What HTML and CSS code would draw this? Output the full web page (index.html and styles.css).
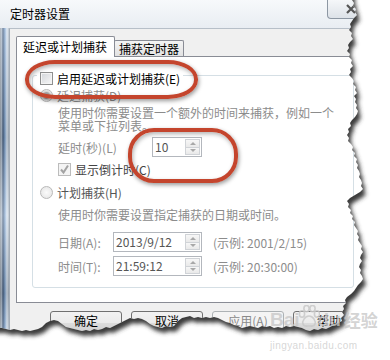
FILE: index.html
```html
<!DOCTYPE html>
<html lang="zh-CN">
<head>
    <meta charset="UTF-8">
    <meta name="viewport" content="width=device-width, initial-scale=1.0">
    <title>定时器设置</title>
    <link rel="stylesheet" href="styles.css">
</head>
<body>
    <div class="window">
        <div class="titlebar">
            <span class="title">定时器设置</span>
            <span class="close">
                <svg width="12" height="10" viewBox="0 0 12 10"><path d="M2 1 L10 9 M10 1 L2 9" stroke="#555" stroke-width="2.2"/></svg>
            </span>
        </div>

        <div class="frame">
            <div class="glass"></div>
            <div class="client">
                <div class="tabs">
                    <div class="tab active">延迟或计划捕获</div>
                    <div class="tab">捕获定时器</div>
                </div>

                <div class="panel">
                    <div class="group">
                        <div class="group-head"><span class="check"></span>启用延迟或计划捕获(E)</div>

                        <div class="row first"><span class="radio on"></span>延迟捕获(D)</div>
                        <p class="desc">使用时你需要设置一个额外的时间来捕获，例如一个<br>菜单或下拉列表。</p>

                        <div class="field delay">
                            <span class="label">延时(秒)(L)</span>
                            <span class="box small"><span class="val">10</span><span class="arrows"><i class="up"></i><i class="down"></i></span></span>
                        </div>

                        <div class="row countdown">
                            <span class="check ticked"><svg width="11" height="11" viewBox="0 0 11 11"><path d="M2 5.5 L4.5 8.5 L9 1.5" fill="none" stroke="#a3a3a3" stroke-width="2"/></svg></span>显示倒计时(C)
                        </div>

                        <div class="row second"><span class="radio"></span>计划捕获(H)</div>
                        <p class="desc desc-2">使用时你需要设置指定捕获的日期或时间。</p>

                        <div class="field date">
                            <span class="label">日期(A):</span>
                            <span class="box wide"><span class="val">2013/9/12</span><span class="arrows"><i class="up"></i><i class="down"></i></span></span>
                            <span class="hint">(示例: 2001/2/15)</span>
                        </div>
                        <div class="field time">
                            <span class="label">时间(T):</span>
                            <span class="box wide"><span class="val">21:59:12</span><span class="arrows"><i class="up"></i><i class="down"></i></span></span>
                            <span class="hint">(示例: 20:30:00)</span>
                        </div>
                    </div>
                </div>

                <div class="buttons">
                    <div class="btn">确定</div>
                    <div class="btn">取消</div>
                    <div class="btn disabled">应用(A)</div>
                    <div class="btn">帮助</div>
                </div>
            </div>
        </div>
    </div>

    <!-- red marks drawn over the screenshot -->
    <div class="ring ring-1"></div>
    <div class="ring ring-2"></div>

    <!-- torn paper edge -->
    <svg class="torn" width="390" height="360" viewBox="0 0 390 360">
        <defs>
            <filter id="soft" x="-10%" y="-10%" width="120%" height="120%"><feGaussianBlur stdDeviation="2.2"/></filter>
            <clipPath id="outside">
                <path clip-rule="evenodd" d="M-20 -20H410V380H-20Z M-10 -10 L352 -10 L352 0 L354 3 L353 6 L356 9 L355 12 L357 15 L354 18 L352 21 L350 24 L351 27 L349 30 L352 33 L351 36 L353 39 L350 42 L348 45 L349 48 L347 51 L350 54 L349 57 L352 60 L351 63 L353 66 L350 69 L351 72 L349 75 L352 78 L354 81 L353 84 L356 87 L355 90 L357 93 L354 96 L356 99 L355 102 L357 105 L356 108 L358 111 L357 114 L355 117 L352 120 L350 123 L351 126 L348 129 L349 132 L347 135 L349 138 L348 141 L351 144 L353 147 L352 150 L355 153 L354 156 L357 159 L356 162 L358 165 L357 168 L359 171 L360 174 L359 177 L361 180 L362 183 L361 186 L363 189 L360 192 L355 195 L350 198 L347 201 L349 204 L348 207 L351 210 L350 213 L353 216 L352 219 L355 222 L354 225 L356 228 L358 231 L357 234 L359 237 L358 240 L360 243 L362 246 L361 249 L363 252 L361 255 L360 258 L362 261 L360 264 L359 267 L361 270 L360 273 L362 276 L363 279 L361 282 L358 285 L356 288 L354 291 L351 294 L347 297 L345 300 L346 303 L343 306 L344 309 L342 312 L344 315 L341 318 L342 321 L338 323 L334 325 L330 327 L326 329 L322 328 L318 330 L314 329 L310 331 L306 330 L302 328 L298 327 L294 326 L290 327 L286 326 L282 328 L278 327 L274 328 L270 326 L266 327 L262 326 L258 328 L254 327 L250 326 L246 327 L242 328 L238 326 L234 325 L230 323 L226 322 L222 320 L218 318 L214 317 L210 318 L206 317 L202 318 L198 317 L194 318 L190 316 L186 317 L182 318 L178 321 L174 326 L170 327 L166 326 L162 328 L158 327 L154 326 L150 324 L146 321 L142 319 L138 318 L134 319 L130 318 L126 320 L122 322 L118 324 L114 326 L110 328 L106 327 L102 329 L98 330 L94 329 L90 331 L86 330 L82 331 L78 330 L74 329 L70 328 L66 327 L62 324 L58 321 L54 320 L50 321 L46 323 L42 327 L38 329 L34 330 L30 331 L26 330 L22 331 L18 330 L14 329 L10 330 L6 329 L2 328 L-10 328 Z"/>
            </clipPath>
        </defs>
        <rect x="-20" y="-20" width="430" height="400" fill="#fff" clip-path="url(#outside)"/>
        <g clip-path="url(#outside)">
            <path transform="translate(3 5)" fill="#3a3a3a" filter="url(#soft)" d="M-10 -10 L352 -10 L352 0 L354 3 L353 6 L356 9 L355 12 L357 15 L354 18 L352 21 L350 24 L351 27 L349 30 L352 33 L351 36 L353 39 L350 42 L348 45 L349 48 L347 51 L350 54 L349 57 L352 60 L351 63 L353 66 L350 69 L351 72 L349 75 L352 78 L354 81 L353 84 L356 87 L355 90 L357 93 L354 96 L356 99 L355 102 L357 105 L356 108 L358 111 L357 114 L355 117 L352 120 L350 123 L351 126 L348 129 L349 132 L347 135 L349 138 L348 141 L351 144 L353 147 L352 150 L355 153 L354 156 L357 159 L356 162 L358 165 L357 168 L359 171 L360 174 L359 177 L361 180 L362 183 L361 186 L363 189 L360 192 L355 195 L350 198 L347 201 L349 204 L348 207 L351 210 L350 213 L353 216 L352 219 L355 222 L354 225 L356 228 L358 231 L357 234 L359 237 L358 240 L360 243 L362 246 L361 249 L363 252 L361 255 L360 258 L362 261 L360 264 L359 267 L361 270 L360 273 L362 276 L363 279 L361 282 L358 285 L356 288 L354 291 L351 294 L347 297 L345 300 L346 303 L343 306 L344 309 L342 312 L344 315 L341 318 L342 321 L338 323 L334 325 L330 327 L326 329 L322 328 L318 330 L314 329 L310 331 L306 330 L302 328 L298 327 L294 326 L290 327 L286 326 L282 328 L278 327 L274 328 L270 326 L266 327 L262 326 L258 328 L254 327 L250 326 L246 327 L242 328 L238 326 L234 325 L230 323 L226 322 L222 320 L218 318 L214 317 L210 318 L206 317 L202 318 L198 317 L194 318 L190 316 L186 317 L182 318 L178 321 L174 326 L170 327 L166 326 L162 328 L158 327 L154 326 L150 324 L146 321 L142 319 L138 318 L134 319 L130 318 L126 320 L122 322 L118 324 L114 326 L110 328 L106 327 L102 329 L98 330 L94 329 L90 331 L86 330 L82 331 L78 330 L74 329 L70 328 L66 327 L62 324 L58 321 L54 320 L50 321 L46 323 L42 327 L38 329 L34 330 L30 331 L26 330 L22 331 L18 330 L14 329 L10 330 L6 329 L2 328 L-10 328 Z"/>
        </g>
    </svg>

    <!-- watermark -->
    <div class="watermark">
        <div class="mark">
            <span>Bai</span>
            <svg class="paw" width="22" height="24" viewBox="0 0 22 24">
                <ellipse cx="4" cy="9" rx="2.6" ry="3.2"/>
                <ellipse cx="8.5" cy="3.6" rx="2.6" ry="3.2"/>
                <ellipse cx="14.5" cy="3.6" rx="2.6" ry="3.2"/>
                <ellipse cx="19" cy="9" rx="2.6" ry="3.2"/>
                <path d="M11 11 C7 11 4 16 5 19 C6 22 9 21 11 21 C13 21 16 22 17 19 C18 16 15 11 11 11 Z"/>
            </svg>
            <span>du</span>
            <span class="cn">经验</span>
        </div>
        <div class="url">jingyan.baidu.com</div>
    </div>
</body>
</html>
```

FILE: styles.css
```css
body {
    margin: 0;
    width: 390px;
    height: 360px;
    overflow: hidden;
    position: relative;
    background: #fff;
    font-family: "Noto Sans CJK SC", "Noto Sans", sans-serif;
    font-size: 12px;
    color: #000;
}

/* window */
.window {
    width: 376px;
}
.titlebar {
    height: 28px;
    display: flex;
    align-items: center;
    background: linear-gradient(#f7f9fb, #e9edf2);
}
.title {
    padding-left: 10px;
    line-height: 14px;
}
.close {
    align-self: flex-start;
    margin-left: auto;
    margin-right: 6px;
    width: 43px;
    height: 19px;
    box-sizing: border-box;
    padding-left: 17px;
    display: flex;
    align-items: center;
    border: 1px solid #8d97a3;
    border-top: 0;
    border-radius: 0 0 4px 4px;
    background: linear-gradient(#f5f7f9, #dde2e8);
}
.frame {
    display: flex;
    height: 312px;
}
.glass {
    width: 9px;
    flex: none;
    background:
        linear-gradient(180deg, rgba(255,255,255,.25), rgba(0,0,0,.12) 35%, rgba(255,255,255,.3) 60%, rgba(0,0,0,.15) 85%, rgba(255,255,255,.2)),
        linear-gradient(90deg, #6c7784 0, #c8d2dc 1px, #4a6283 3px, #86a9d2 5px, #dbe6f2 7px, #a3aeba 9px);
}
.client {
    flex: 1;
    background: #f0f0f0;
    border-top: 1px solid #b7bfc8;
    border-left: 1px solid #a4adb7;
}

/* tabs */
.tabs {
    display: flex;
    align-items: flex-end;
    height: 27px;
    padding-left: 6px;
}
.tab {
    margin-left: -1px;
    padding: 0 4px;
    line-height: 15px;
    border: 1px solid #898c95;
    border-bottom: 0;
    border-radius: 2px 2px 0 0;
    background: linear-gradient(#f4f4f4, #e2e2e2);
}
.tab.active {
    position: relative;
    z-index: 1;
    margin: 0 0 -1px 0;
    padding: 0 7px 0 6px;
    height: 20px;
    line-height: 19px;
    background: #fff;
}
.panel {
    margin: 0 6px;
    padding: 18px 15px 14px;
    background: #fff;
    border: 1px solid #898c95;
}

/* group box */
.group {
    padding: 0 7px 11px;
    border: 1px solid #d5dfe5;
    border-radius: 3px;
    color: #8c8c8c;
}
.group-head {
    display: flex;
    align-items: center;
    gap: 4px;
    width: max-content;
    height: 16px;
    margin: -6px 0 0 -3px;
    padding: 0 3px;
    background: #fff;
    color: #000;
}
.row {
    display: flex;
    align-items: center;
    gap: 4px;
    height: 16px;
}
.row.first {
    margin-top: 1px;
}
.row.countdown {
    margin: 4px 0 0 18px;
    color: #444;
}
.row.second {
    margin-top: 7px;
    color: #555;
}
.desc {
    margin: 3px 0 0 18px;
    line-height: 13px;
}
.desc-2 {
    margin-top: 8px;
}
.field {
    display: flex;
    align-items: center;
    height: 20px;
    margin-left: 18px;
}
.field.delay {
    margin-top: 5px;
}
.field.delay .label {
    width: 94px;
}
.field.date {
    margin-top: 11px;
}
.field.time {
    margin-top: 4px;
}
.field.date .label, .field.time .label {
    width: 55px;
}
.hint {
    margin-left: 11px;
}

/* inputs */
.box {
    display: flex;
    height: 20px;
    box-sizing: border-box;
    border: 1px solid #b3b7bd;
    background: #fff;
    color: #555;
}
.box.small {
    width: 50px;
}
.box.wide {
    width: 89px;
}
.box .val {
    flex: 1;
    padding-left: 2px;
    line-height: 18px;
}
.arrows {
    display: flex;
    flex-direction: column;
    width: 15px;
    margin: 1px;
}
.arrows i {
    flex: 1;
    display: flex;
    align-items: center;
    justify-content: center;
    border: 1px solid #d0d3d7;
    background: linear-gradient(#f7f7f7, #e9e9e9);
}
.arrows i + i {
    border-top: 0;
}
.arrows i::after {
    content: "";
    border-left: 3px solid transparent;
    border-right: 3px solid transparent;
}
.arrows .up::after {
    border-bottom: 3px solid #a8a8a8;
}
.arrows .down::after {
    border-top: 3px solid #a8a8a8;
}

/* check boxes and radios */
.check {
    width: 13px;
    height: 13px;
    box-sizing: border-box;
    flex: none;
    border: 1px solid #8e8f8f;
    background: linear-gradient(135deg, #d2d5d9, #f8f8f8);
    box-shadow: inset 0 0 0 1px #f4f4f4;
}
.check.ticked {
    display: flex;
    align-items: center;
    justify-content: center;
    border-color: #bcbcbc;
    background: #f4f4f4;
    box-shadow: none;
}
.radio {
    width: 13px;
    height: 13px;
    box-sizing: border-box;
    flex: none;
    border: 1px solid #b9b9b9;
    border-radius: 50%;
    background: radial-gradient(circle, #fbfbfb, #e2e2e2);
}
.radio.on {
    background: radial-gradient(circle, #9a9a9a 0, #a8a8a8 3px, #d6d6d6 4px, #f2f2f2 6px);
}

/* buttons */
.buttons {
    display: flex;
    gap: 9px;
    margin-top: 8px;
    padding-left: 40px;
}
.btn {
    width: 72px;
    height: 23px;
    box-sizing: border-box;
    border: 1px solid #707070;
    border-radius: 3px;
    background: linear-gradient(#f2f2f2 0, #ebebeb 50%, #dddddd 50%, #cfcfcf 100%);
    text-align: center;
    line-height: 18px;
}
.btn.disabled {
    color: #8a8a8a;
    border-color: #adb2b5;
    background: #f4f4f4;
}

/* annotation rings */
.ring {
    position: absolute;
    box-sizing: border-box;
    border: 4px solid #c4452d;
    box-shadow: 1px 2px 4px rgba(0, 0, 0, .4), inset 1px 2px 4px rgba(0, 0, 0, .3);
}
.ring-1 {
    left: 25px;
    top: 60px;
    width: 173px;
    height: 39px;
    border-radius: 30px / 19px;
}
.ring-2 {
    left: 128px;
    top: 128px;
    width: 110px;
    height: 55px;
    border-radius: 26px;
}

.torn {
    position: absolute;
    left: 0;
    top: 0;
}

/* watermark */
.watermark {
    position: absolute;
    left: 270px;
    top: 305px;
    color: rgba(200, 200, 200, .8);
}
.mark {
    display: flex;
    align-items: flex-end;
    font-family: "Liberation Sans", Arial, sans-serif;
    font-weight: bold;
    font-size: 19px;
    line-height: 22px;
}
.mark .cn {
    margin-left: 3px;
    font-family: "Noto Sans CJK SC", sans-serif;
    font-size: 17px;
}
.paw {
    margin: 0 -2px 2px;
    fill: none;
    stroke: rgba(200, 200, 200, .85);
    stroke-width: 1.6;
}
.url {
    margin-top: 9px;
    font-family: "Liberation Sans", Arial, sans-serif;
    font-size: 10px;
    letter-spacing: .4px;
    color: rgba(205, 205, 205, .8);
}
```
